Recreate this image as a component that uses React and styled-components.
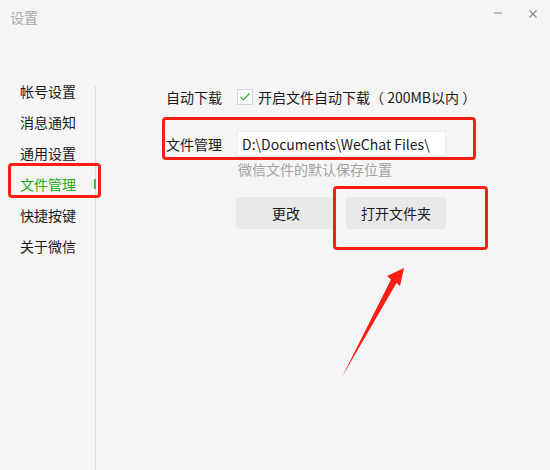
import React from 'react';
import styled, { createGlobalStyle } from 'styled-components';

const GlobalStyle = createGlobalStyle`
	html, body {
		margin: 0;
		padding: 0;
		background: #f5f5f5;
	}
	body {
		font-family: "Noto Sans CJK SC", "Liberation Sans", sans-serif;
		font-size: 14px;
		color: #1a1a1a;
	}
`;

const Window = styled.div`
	position: relative;
	display: flex;
	flex-direction: column;
	width: 550px;
	height: 470px;
	overflow: hidden;
	background-color: #f5f5f5;
`;

const TitleBar = styled.div`
	display: flex;
	justify-content: space-between;
	align-items: flex-start;
	height: 36px;
	padding: 7px 13px 0 10px;
	box-sizing: border-box;
`;

const Title = styled.span`
	font-size: 14px;
	line-height: 20px;
	color: #aaaaaa;
`;

const Controls = styled.div`
	display: flex;
	gap: 27px;
	margin-top: 3px;
`;

const Body = styled.div`
	display: flex;
	flex: 1;
`;

const Sidebar = styled.div`
	display: flex;
	width: 96px;
`;

const Menu = styled.div`
	display: flex;
	flex-direction: column;
	width: 95px;
	padding-top: 39px;
`;

const MenuItem = styled.div`
	position: relative;
	display: flex;
	justify-content: space-between;
	align-items: center;
	height: 31px;
	padding-left: 20px;
	font-size: 14px;
	color: ${(props) => (props.active ? '#1aad19' : '#1a1a1a')};
`;

const ActiveBar = styled.span`
	width: 2px;
	height: 10px;
	margin-right: -1px;
	background-color: #3ec23c;
`;

const Divider = styled.div`
	width: 1px;
	margin-top: 50px;
	background-color: #dcdcdc;
`;

const Content = styled.div`
	display: flex;
	flex-direction: column;
	align-items: flex-start;
	padding: 49px 0 0 70px;
`;

const Row = styled.div`
	position: relative;
	display: flex;
	align-items: center;
	height: ${(props) => props.height || 24}px;
	margin-top: ${(props) => props.top || 0}px;
`;

const Label = styled.span`
	width: 70px;
	font-size: 14px;
	line-height: 20px;
`;

const CheckBox = styled.span`
	display: flex;
	align-items: center;
	justify-content: center;
	width: 14px;
	height: 14px;
	margin-left: 1px;
	border: 1px solid #d6d6d6;
	background-color: #fafafa;
`;

const CheckText = styled.span`
	margin-left: 5px;
	font-size: 14px;
	line-height: 20px;
	white-space: pre;
`;

const PathInput = styled.div`
	display: flex;
	align-items: center;
	width: 209px;
	height: 25px;
	margin-left: 1px;
	padding-left: 4px;
	box-sizing: border-box;
	border: 1px solid #ececec;
	background-color: #ffffff;
	font-size: 14px;
	white-space: nowrap;
`;

const Hint = styled.div`
	margin: 3px 0 0 72px;
	font-size: 14px;
	line-height: 20px;
	color: #a3a3a3;
`;

const ButtonRow = styled.div`
	display: flex;
	gap: 10px;
	margin: 18px 0 0 70px;
`;

const ButtonWrap = styled.div`
	position: relative;
`;

const Button = styled.button`
	width: 100px;
	height: 32px;
	padding: 0;
	border: none;
	border-radius: 3px;
	background-color: #e9e9e9;
	font-family: inherit;
	font-size: 14px;
	color: #1a1a1a;
`;

const Highlight = styled.div`
	position: absolute;
	top: ${(props) => props.t}px;
	right: ${(props) => props.r}px;
	bottom: ${(props) => props.b}px;
	left: ${(props) => props.l}px;
	border: 3px solid #fa1e14;
	border-radius: 4px;
	pointer-events: none;
`;

const Arrow = styled.svg`
	position: absolute;
	left: 330px;
	top: 260px;
`;

const menu = ['帐号设置', '消息通知', '通用设置', '文件管理', '快捷按键', '关于微信'];

export default function App() {
	return (
		<Window>
			<GlobalStyle />
			<TitleBar>
				<Title>设置</Title>
				<Controls>
					<svg width="8" height="8" viewBox="0 0 8 8">
						<rect x="0" y="2" width="8" height="2" fill="#bdbdbd" />
					</svg>
					<svg width="8" height="8" viewBox="0 0 8 8">
						<path d="M0.5 0.5 L7.5 7.5 M7.5 0.5 L0.5 7.5" stroke="#8a8a8a" strokeWidth="1.3" />
					</svg>
				</Controls>
			</TitleBar>
			<Body>
				<Sidebar>
					<Menu>
						{menu.map((name) => (
							<MenuItem key={name} active={name === '文件管理'}>
								{name}
								{name === '文件管理' && (
									<>
										<ActiveBar />
										<Highlight t={-5} r={-6} b={1} l={8} />
									</>
								)}
							</MenuItem>
						))}
					</Menu>
					<Divider />
				</Sidebar>
				<Content>
					<Row>
						<Label>自动下载</Label>
						<CheckBox>
							<svg width="12" height="10" viewBox="0 0 12 10">
								<polyline points="1.5,5 4.5,8 10.5,1.5" fill="none" stroke="#35b335" strokeWidth="1.2" />
							</svg>
						</CheckBox>
						<CheckText>开启文件自动下载（ 200MB以内 ）</CheckText>
					</Row>
					<Row height={25} top={22}>
						<Label>文件管理</Label>
						<PathInput>D:\Documents\WeChat Files\</PathInput>
						<Highlight t={-14} r={-30} b={-4} l={-4} />
					</Row>
					<Hint>微信文件的默认保存位置</Hint>
					<ButtonRow>
						<Button>更改</Button>
						<ButtonWrap>
							<Button>打开文件夹</Button>
							<Highlight t={-11} r={-42} b={-21} l={-13} />
						</ButtonWrap>
					</ButtonRow>
				</Content>
			</Body>
			<Arrow width="80" height="120" viewBox="0 0 80 120">
				<polygon points="74,8 70,26 66.5,23 12,117 61,19.5 57,16" fill="#fa1e14" />
			</Arrow>
		</Window>
	);
}
